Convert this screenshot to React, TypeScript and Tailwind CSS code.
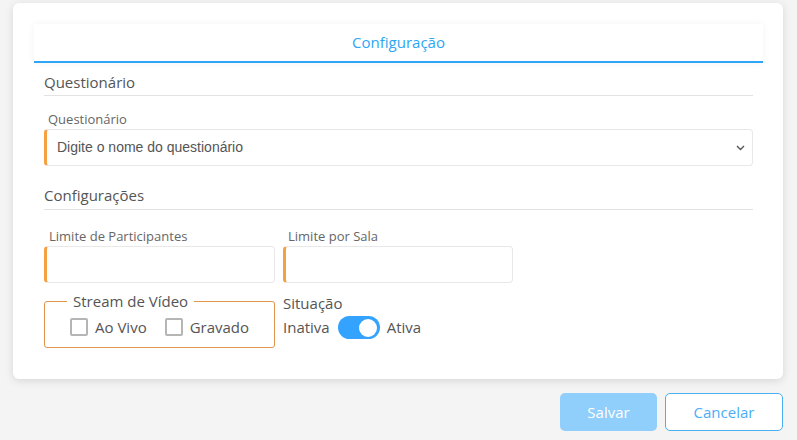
import React from "react";

const heading = { fontFamily: '"Open Sans", sans-serif' };

export default function App() {
  return (
    <div className="w-[797px] h-[440px] bg-[#f4f4f4] pt-[3px] pl-[13px] pr-[14px] overflow-hidden" style={heading}>
      <div className="bg-white rounded-[6px] shadow-[0_2px_8px_rgba(0,0,0,0.12)] pt-[21px] pl-[21px] pr-[20px] h-[376px]">
        <div className="h-[39px] border-b-2 border-[#2ea6f5] shadow-[0_0_8px_rgba(0,0,0,0.05)] flex items-center justify-center text-[15px] text-[#2ea6f5]">
          Configuração
        </div>
        <div className="px-[10px]">
          <div className="mt-[9px] pb-[3px] border-b border-[#e2e2e2] text-[15px] text-[#555] leading-[20px]">Questionário</div>
          <div className="mt-[15px] pl-[4px] text-[13px] text-[#666] leading-[16px]">Questionário</div>
          <div className="mt-[2px] h-[37px] border border-[#e8e8e8] border-l-[3px] border-l-[#f5a142] rounded-[4px] flex items-center justify-between pl-[10px] pr-[7px]">
            <span className="text-[14px] text-[#555]" style={{ fontFamily: '"Liberation Sans", Arial, sans-serif' }}>Digite o nome do questionário</span>
            <svg width="9" height="6" viewBox="0 0 9 6"><path d="M1 1l3.5 3.5L8 1" stroke="#555" strokeWidth="1.4" fill="none" /></svg>
          </div>
          <div className="mt-[19px] pb-[4px] border-b border-[#e2e2e2] text-[15px] text-[#555] leading-[20px]">Configurações</div>
          <div className="mt-[18px] flex gap-[8px]">
            <div className="w-[231px]">
              <div className="pl-[5px] text-[13px] text-[#666] leading-[16px]">Limite de Participantes</div>
              <div className="mt-[2px] h-[37px] border border-[#e8e8e8] border-l-[3px] border-l-[#f5a142] rounded-[4px]" />
            </div>
            <div className="w-[230px]">
              <div className="pl-[5px] text-[13px] text-[#666] leading-[16px]">Limite por Sala</div>
              <div className="mt-[2px] h-[37px] border border-[#e8e8e8] border-l-[3px] border-l-[#f5a142] rounded-[4px]" />
            </div>
          </div>
          <div className="mt-[9px] flex gap-[8px]">
            <fieldset className="w-[231px] h-[56px] border border-[#e2954a] rounded-[3px] pl-[25px] pr-[10px] pb-0 m-0">
              <legend className="px-[6px] -ml-[3px] text-[15px] text-[#555] leading-[18px]">Stream de Vídeo</legend>
              <div className="flex items-center mt-[6px]">
                <span className="w-[18px] h-[18px] border-2 border-[#b5b5b5] rounded-[2px]" />
                <span className="ml-[7px] text-[15px] text-[#555]">Ao Vivo</span>
                <span className="ml-[18px] w-[18px] h-[18px] border-2 border-[#b5b5b5] rounded-[2px]" />
                <span className="ml-[7px] text-[15px] text-[#555]">Gravado</span>
              </div>
            </fieldset>
            <div className="pt-[1px]">
              <div className="text-[15px] text-[#555] leading-[20px]">Situação</div>
              <div className="mt-[3px] flex items-center">
                <span className="text-[15px] text-[#555]">Inativa</span>
                <span className="ml-[8px] w-[42px] h-[23px] rounded-full bg-[#33a3ff] flex items-center justify-end pr-[3px]">
                  <span className="w-[18px] h-[18px] rounded-full bg-white" />
                </span>
                <span className="ml-[7px] text-[15px] text-[#555]">Ativa</span>
              </div>
            </div>
          </div>
        </div>
      </div>
      <div className="mt-[14px] flex justify-end gap-[8px]">
        <button className="w-[97px] h-[38px] rounded-[5px] bg-[#90cefb] text-white text-[15px]">Salvar</button>
        <button className="w-[118px] h-[38px] rounded-[5px] border border-[#4aaef5] bg-white text-[#4aaef5] text-[15px]">Cancelar</button>
      </div>
    </div>
  );
}
